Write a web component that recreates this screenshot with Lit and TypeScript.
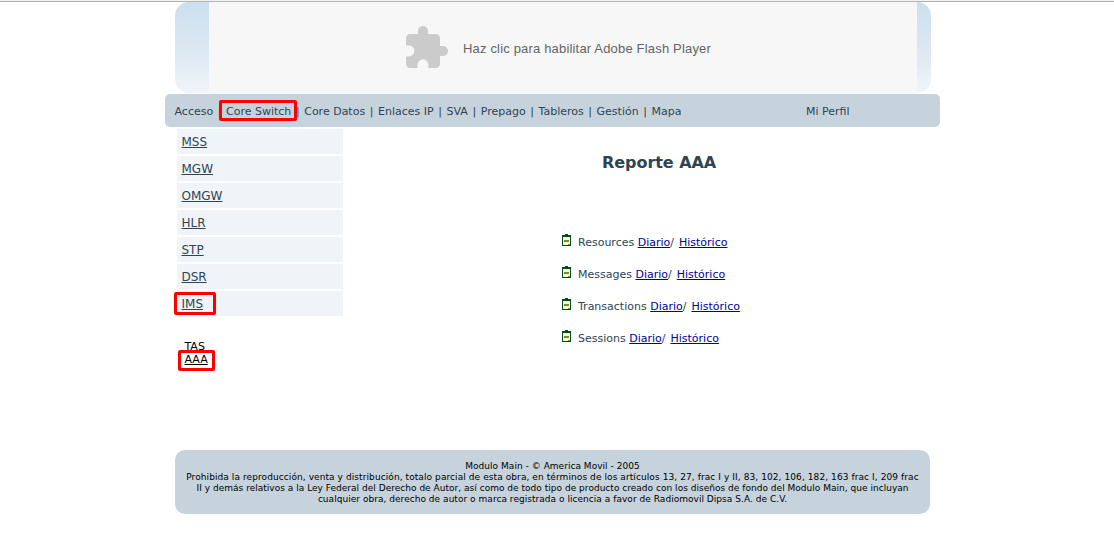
import { LitElement, html, css, svg } from "lit";
import { customElement } from "lit/decorators.js";

const MENU = ["Acceso", "Core Switch", "Core Datos", "Enlaces IP", "SVA", "Prepago", "Tableros", "Gestión", "Mapa"];
const SIDE = ["MSS", "MGW", "OMGW", "HLR", "STP", "DSR", "IMS"];
const REPORTS = ["Resources", "Messages", "Transactions", "Sessions"];
const LEGAL = [
  "Modulo Main - © America Movil - 2005",
  "Prohibida la reproducción, venta y distribución, totalo parcial de esta obra, en términos de los artículos 13, 27, frac I y II, 83, 102, 106, 182, 163 frac I, 209 frac",
  "II y demás relativos a la Ley Federal del Derecho de Autor, así como de todo tipo de producto creado con los diseños de fondo del Modulo Main, que incluyan",
  "cualquier obra, derecho de autor o marca registrada o licencia a favor de Radiomovil Dipsa S.A. de C.V.",
];

const clipboard = html`<svg class="clip" width="9" height="12" viewBox="0 0 9 12" shape-rendering="crispEdges">
  ${svg`<path fill="#004b23" d="M0 1h3v-1h3v1h3v11h-9z"/>
  <path fill="#ffffcc" d="M1 3h7v8h-7z"/>
  <path fill="#7d8a35" d="M2 6h5v2h-5zM6 10h2v1h-2z"/>`}
</svg>`;

@customElement("app-root")
export class AppRoot extends LitElement {
  static styles = css`
    :host {
      display: block;
      box-sizing: border-box;
      height: 554px;
      overflow: hidden;
      background: #fff;
      border-top: 1px solid #f2f2f2;
      font-family: Verdana, "DejaVu Sans", sans-serif;
      color: #2e4453;
      white-space: nowrap;
    }
    .rule { height: 1px; background: #b4b4b4; }
    .page { width: 775px; margin-left: 165px; }
    .banner {
      box-sizing: border-box;
      width: 756px;
      height: 91px;
      margin: 0 0 1px 10px;
      padding: 0 14px 0 34px;
      border-radius: 14px;
      background: linear-gradient(#cbdfee, #dfeaf4 62%, #f1f5f9);
    }
    .flash {
      box-sizing: border-box;
      height: 92px;
      display: flex;
      align-items: center;
      padding: 0 0 0 193px;
      background: #f7f7f7;
      color: #646464;
      font: 13px/16px "Liberation Sans", Arial, sans-serif;
    }
    .puzzle { margin-right: 13px; flex: none; }
    .flash span { padding-top: 2px; letter-spacing: 0.175px; }
    .nav {
      box-sizing: border-box;
      height: 33px;
      display: flex;
      padding: 0 0 0 9.500px;
      border-radius: 5px;
      background: #c6d3dc;
      font-size: 11px;
      line-height: 36px;
    }
    .menu { display: flex; width: 631.500px; white-space: pre; }
    .sep { word-spacing: 1.080px; }
    .hit { position: relative; }
    .mark {
      position: absolute;
      box-sizing: border-box;
      border: 3px solid #f00;
      border-radius: 2px;
    }
    .m-core { left: -7px; top: 6px; width: 78px; height: 21px; }
    .m-ims { left: -7.500px; top: -5px; width: 42px; height: 23px; }
    .m-aaa { left: -6.500px; top: -3px; width: 37px; height: 21px; }
    .body { box-sizing: border-box; display: flex; height: 323px; padding: 2px 0 0 12px; }
    .side { width: 166px; }
    .row {
      height: 25px;
      margin-bottom: 2px;
      padding-left: 4.500px;
      background: #f0f4f8;
      font-size: 12px;
      line-height: 27px;
    }
    .link { position: relative; display: inline-block; line-height: 15px; text-decoration: underline; }
    .sub { padding: 22px 0 0 7.500px; font-size: 11px; line-height: 13px; color: #000; }
    .sub .link { display: block; width: max-content; line-height: 13px; }
    .plain { display: block; }
    .main { flex: 1; padding-left: 219px; }
    h1 { margin: 24px 0 0 40px; font-size: 16px; line-height: 20px; font-weight: bold; letter-spacing: -0.05px; }
    .list { margin-top: 53px; }
    .item { display: flex; height: 32px; line-height: 34px; font-size: 11px; }
    .item a { color: #00009c; text-decoration: underline; }
    .item a + a { margin-left: 1.500px; }
    .clip { margin: 8px 7px 0 0; flex: none; }
    .foot {
      box-sizing: border-box;
      width: 755px;
      height: 64px;
      margin: 0 0 0 10px;
      padding-top: 11px;
      border-radius: 10px;
      background: #c6d3dc;
      color: #000;
      text-align: center;
      font-size: 9px;
      line-height: 11px;
    }
    .l0 { letter-spacing: 0.03px; }
    .l1 { letter-spacing: 0.083px; }
    .l2 { letter-spacing: 0.02px; }
    .l3 { letter-spacing: 0.035px; }
  `;

  render() {
    return html`
      <div class="rule"></div>
      <div class="page">
        <div class="banner">
          <div class="flash">
            <svg class="puzzle" width="48" height="48" viewBox="0 0 24 24" fill="#cbcbcb">
              <path d="M20.500 11H19V7c0-1.100-.9-2-2-2h-4V3.500C13 2.120 11.880 1 10.500 1S8 2.120 8 3.500V5H4c-1.100 0-1.990.9-1.990 2v3.800H3.500c1.490 0 2.700 1.210 2.700 2.700s-1.210 2.700-2.700 2.700H2V20c0 1.100.9 2 2 2h3.800v-1.500c0-1.490 1.210-2.700 2.700-2.700 1.490 0 2.700 1.210 2.700 2.700V22H17c1.100 0 2-.9 2-2v-4h1.500c1.380 0 2.500-1.120 2.500-2.500S21.880 11 20.500 11z" />
            </svg>
            <span>Haz clic para habilitar Adobe Flash Player</span>
          </div>
        </div>
        <div class="nav">
          <div class="menu">${MENU.map((m, i) => html`<span class="hit">${m}${i === 1 ? html`<i class="mark m-core"></i>` : ""}</span>${i < MENU.length - 1 ? html`<span class="sep"> | </span>` : ""}`)}</div>
          <span>Mi Perfil</span>
        </div>
        <div class="body">
          <div class="side">
            ${SIDE.map((s) => html`<div class="row"><a class="link">${s}${s === "IMS" ? html`<i class="mark m-ims"></i>` : ""}</a></div>`)}
            <div class="sub"><span class="plain">TAS</span><a class="link">AAA<i class="mark m-aaa"></i></a></div>
          </div>
          <div class="main">
            <h1>Reporte AAA</h1>
            <div class="list">
              ${REPORTS.map((r) => html`<div class="item">${clipboard}<span>${r} <a>Diario</a>/ <a>Histórico</a></span></div>`)}
            </div>
          </div>
        </div>
        <div class="foot">${LEGAL.map((l, i) => html`<div class="l${i}">${l}</div>`)}</div>
      </div>
    `;
  }
}
